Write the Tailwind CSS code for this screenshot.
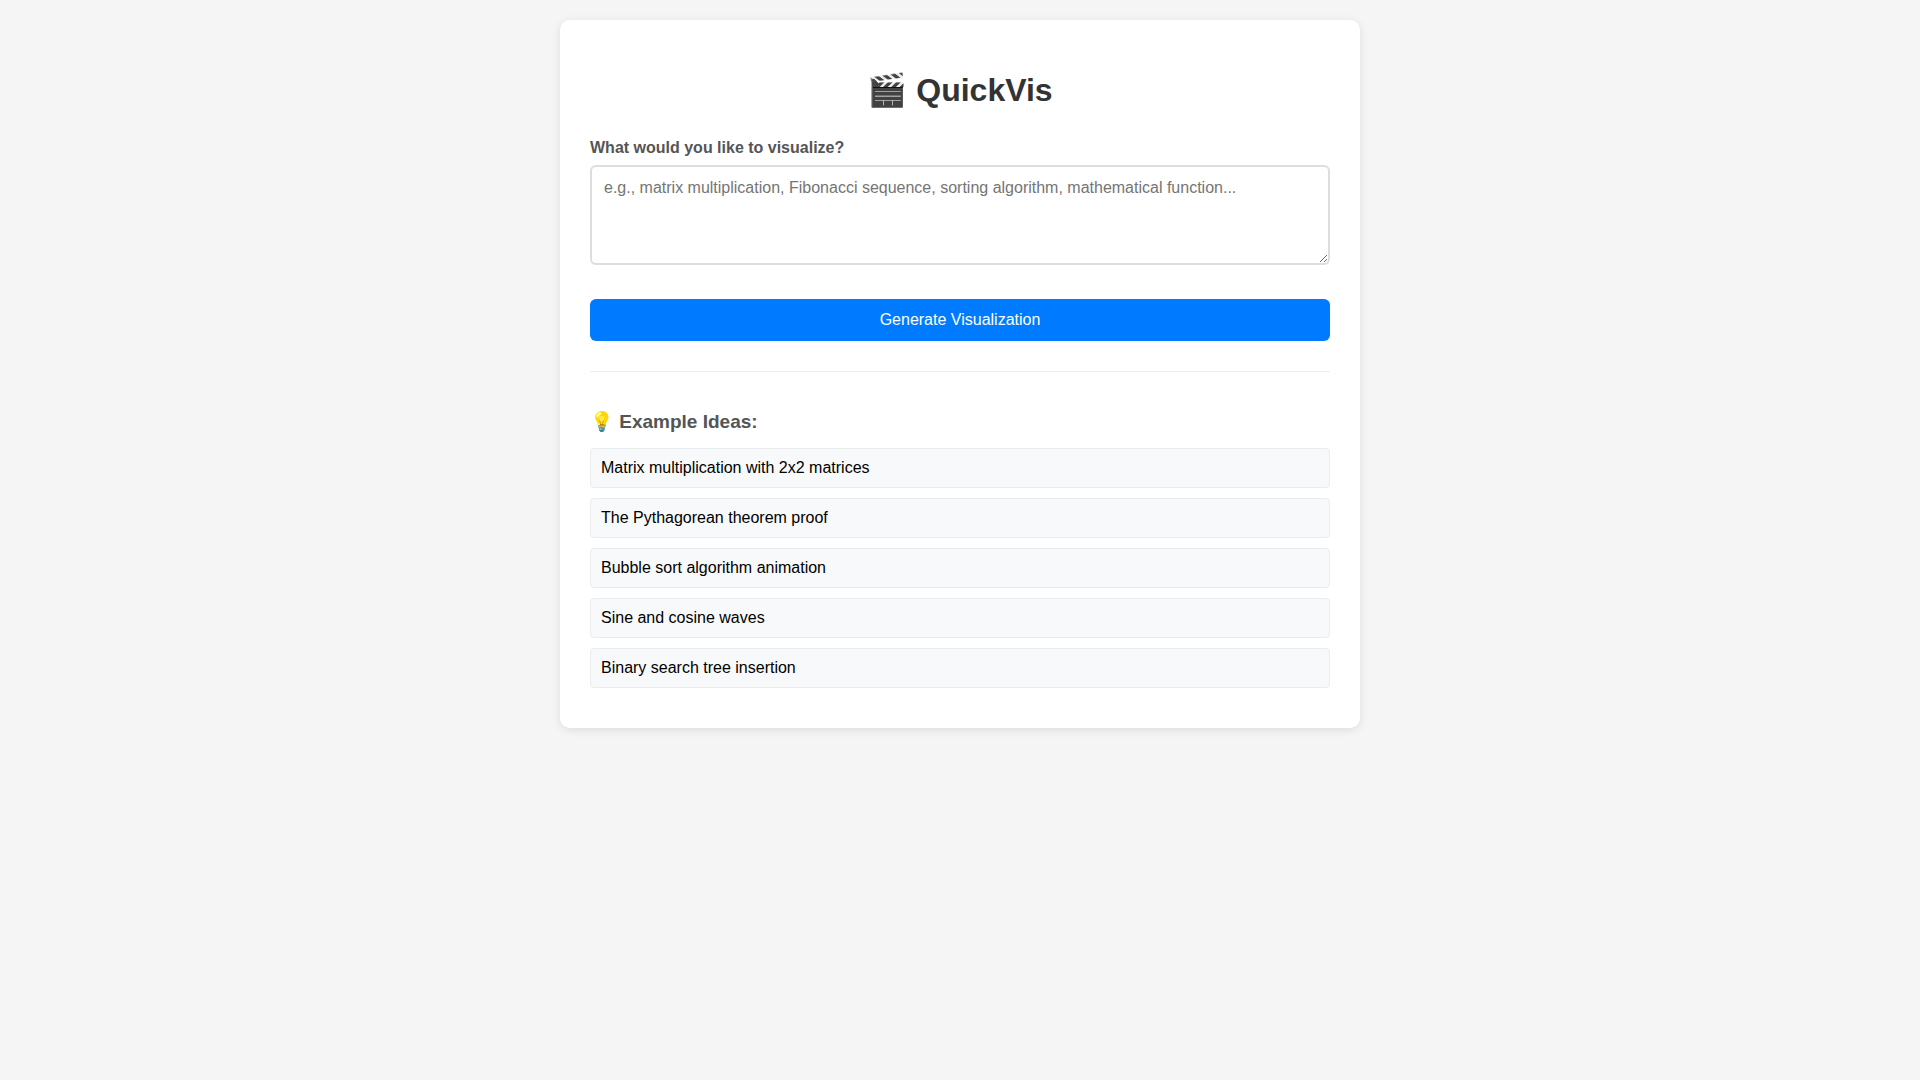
<!DOCTYPE html>
<html lang="en">
<head>
  <meta charset="UTF-8" />
  <meta name="viewport" content="width=device-width, initial-scale=1.0" />
  <title>QuickVis</title>
  <script src="https://cdn.jsdelivr.net/npm/@tailwindcss/browser@4"></script>
</head>
<body class="bg-[#f5f5f5] p-5 font-['Liberation_Sans',Arial,sans-serif] text-base leading-[18px] text-black">
  <main class="mx-auto max-w-[800px] rounded-[10px] bg-white px-[30px] pt-[52px] pb-10 shadow-[0_2px_10px_rgba(0,0,0,0.1)]">
    <h1 class="mb-[30px] text-center text-[32px] leading-[37px] font-bold text-[#333]">🎬 QuickVis</h1>
    <form id="visForm">
      <label for="prompt" class="mb-2 block font-bold text-[#555]">What would you like to visualize?</label>
      <textarea id="prompt" class="block h-[100px] w-full resize-y rounded-md border-2 border-[#ddd] p-3 placeholder:text-[#757575] focus:border-[#007bff] focus:outline-none" placeholder="e.g., matrix multiplication, Fibonacci sequence, sorting algorithm, mathematical function..."></textarea>
      <button type="submit" class="mt-[34px] w-full cursor-pointer rounded-md bg-[#007bff] p-3 text-white hover:bg-[#0056b3]">Generate Visualization</button>
    </form>
    <section class="mt-[30px] border-t border-[#eee] pt-[39px]">
      <h3 class="mb-[15px] text-[19px] leading-[22px] font-bold text-[#555]">💡 Example Ideas:</h3>
      <div class="flex flex-col gap-[10px]">
        <button type="button" class="example cursor-pointer rounded border border-[#e9ecef] bg-[#f8f9fa] p-[10px] text-left hover:bg-[#e9ecef]">Matrix multiplication with 2x2 matrices</button>
        <button type="button" class="example cursor-pointer rounded border border-[#e9ecef] bg-[#f8f9fa] p-[10px] text-left hover:bg-[#e9ecef]">The Pythagorean theorem proof</button>
        <button type="button" class="example cursor-pointer rounded border border-[#e9ecef] bg-[#f8f9fa] p-[10px] text-left hover:bg-[#e9ecef]">Bubble sort algorithm animation</button>
        <button type="button" class="example cursor-pointer rounded border border-[#e9ecef] bg-[#f8f9fa] p-[10px] text-left hover:bg-[#e9ecef]">Sine and cosine waves</button>
        <button type="button" class="example cursor-pointer rounded border border-[#e9ecef] bg-[#f8f9fa] p-[10px] text-left hover:bg-[#e9ecef]">Binary search tree insertion</button>
      </div>
    </section>
  </main>

  <script>
    const prompt = document.getElementById('prompt');

    document.querySelectorAll('.example').forEach(item => {
      item.addEventListener('click', () => {
        prompt.value = item.textContent;
      });
    });

    document.getElementById('visForm').addEventListener('submit', e => {
      e.preventDefault();
    });
  </script>
</body>
</html>
